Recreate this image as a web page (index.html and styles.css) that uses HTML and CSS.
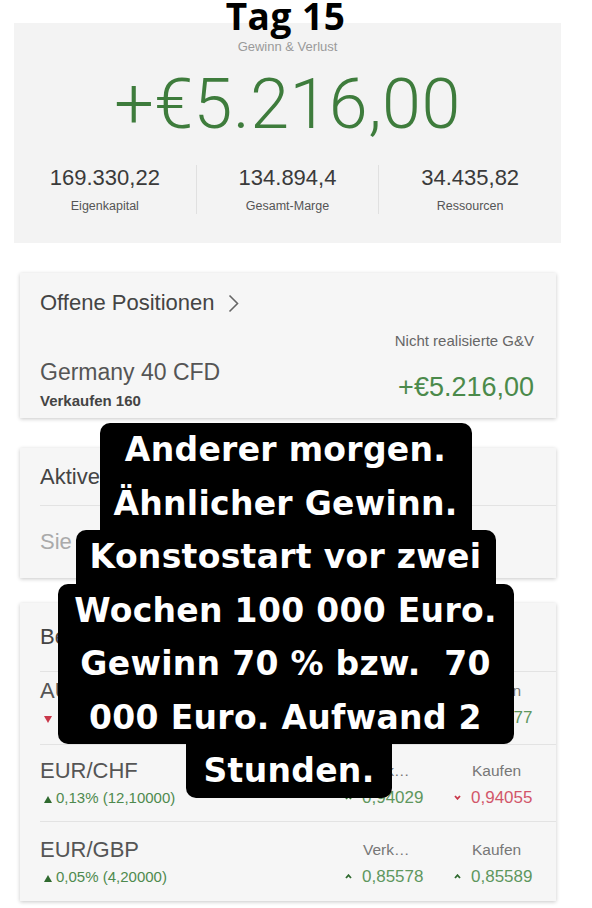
FILE: index.html
```html
<!DOCTYPE html>
<html lang="de">

<head>
    <meta charset="UTF-8">
    <meta name="viewport" content="width=device-width, initial-scale=1.0">
    <title>Tag 15</title>

    <link rel="stylesheet" href="styles.css">
</head>

<body>

    <div class="day">Tag 15</div>

    <section class="summary">
        <div class="summary-label">Gewinn &amp; Verlust</div>
        <div class="summary-total">+€5.216,00</div>
        <div class="stats">
            <div class="stat">
                <div class="stat-value">169.330,22</div>
                <div class="stat-label">Eigenkapital</div>
            </div>
            <div class="stat">
                <div class="stat-value">134.894,4</div>
                <div class="stat-label">Gesamt-Marge</div>
            </div>
            <div class="stat">
                <div class="stat-value">34.435,82</div>
                <div class="stat-label">Ressourcen</div>
            </div>
        </div>
    </section>

    <section class="card positions">
        <div class="card-title">
            Offene Positionen
            <svg class="chevron" width="11" height="19" viewBox="0 0 11 19"><polyline points="1.5,1.5 9.5,9.5 1.5,17.5" fill="none" stroke="#666" stroke-width="1.6"/></svg>
        </div>
        <div class="position">
            <div class="position-main">
                <div class="position-name">Germany 40 CFD</div>
                <div class="position-side">Verkaufen 160</div>
            </div>
            <div class="position-pl">
                <div class="pl-label">Nicht realisierte G&amp;V</div>
                <div class="pl-value">+€5.216,00</div>
            </div>
        </div>
    </section>

    <section class="card">
        <div class="card-head">Aktive Orders</div>
        <div class="card-note">Sie haben keine aktiven Orders</div>
    </section>

    <section class="card watch">
        <div class="card-head">Beobachtungsliste</div>

        <div class="pair-row row-first">
            <div class="pair">
                <div class="pair-name">AUD/USD</div>
                <div class="pair-change down">
                    <svg class="tri" width="8" height="7" viewBox="0 0 8 7"><polygon points="0,0 8,0 4,7" fill="#c9384a"/></svg> 0,04% (-2,70000)
                </div>
            </div>
            <div class="quote">
                <div class="quote-label">Verk…</div>
                <div class="quote-value up"><svg class="caret" width="7" height="5" viewBox="0 0 7 5"><polyline points="1,4 3.5,1.2 6,4" fill="none" stroke="#2f6a2f" stroke-width="1.8"/></svg>0,67263</div>
            </div>
            <div class="quote">
                <div class="quote-label">Kaufen</div>
                <div class="quote-value up"><svg class="caret" width="7" height="5" viewBox="0 0 7 5"><polyline points="1,4 3.5,1.2 6,4" fill="none" stroke="#2f6a2f" stroke-width="1.8"/></svg>0,67277</div>
            </div>
        </div>

        <div class="pair-row">
            <div class="pair">
                <div class="pair-name">EUR/CHF</div>
                <div class="pair-change">
                    <svg class="tri" width="8" height="7" viewBox="0 0 8 7"><polygon points="0,7 8,7 4,0" fill="#2f6a2f"/></svg>0,13% (12,10000)
                </div>
            </div>
            <div class="quote">
                <div class="quote-label">Verk…</div>
                <div class="quote-value up"><svg class="caret" width="7" height="5" viewBox="0 0 7 5"><polyline points="1,4 3.5,1.2 6,4" fill="none" stroke="#2f6a2f" stroke-width="1.8"/></svg>0,94029</div>
            </div>
            <div class="quote">
                <div class="quote-label">Kaufen</div>
                <div class="quote-value down"><svg class="caret" width="7" height="5" viewBox="0 0 7 5"><polyline points="1,1 3.5,3.8 6,1" fill="none" stroke="#c9384a" stroke-width="1.8"/></svg>0,94055</div>
            </div>
        </div>

        <div class="pair-row">
            <div class="pair">
                <div class="pair-name">EUR/GBP</div>
                <div class="pair-change">
                    <svg class="tri" width="8" height="7" viewBox="0 0 8 7"><polygon points="0,7 8,7 4,0" fill="#2f6a2f"/></svg>0,05% (4,20000)
                </div>
            </div>
            <div class="quote">
                <div class="quote-label">Verk…</div>
                <div class="quote-value up"><svg class="caret" width="7" height="5" viewBox="0 0 7 5"><polyline points="1,4 3.5,1.2 6,4" fill="none" stroke="#2f6a2f" stroke-width="1.8"/></svg>0,85578</div>
            </div>
            <div class="quote">
                <div class="quote-label">Kaufen</div>
                <div class="quote-value up"><svg class="caret" width="7" height="5" viewBox="0 0 7 5"><polyline points="1,4 3.5,1.2 6,4" fill="none" stroke="#2f6a2f" stroke-width="1.8"/></svg>0,85589</div>
            </div>
        </div>
    </section>

    <!-- Story-Text über dem Screenshot -->
    <div class="caption">
        <div class="caption-block block-1">Anderer morgen.<br>Ähnlicher Gewinn.</div>
        <div class="caption-block block-2">Konstostart vor zwei</div>
        <div class="caption-block block-3">Wochen 100 000 Euro.<br>Gewinn 70 % bzw.&nbsp; 70<br>000 Euro. Aufwand 2</div>
        <div class="caption-block block-4">Stunden.</div>
    </div>

</body>
</html>
```

FILE: styles.css
```css
body {
    margin: 0;
    padding: 0;
    position: relative;
    width: 592px;
    height: 908px;
    overflow: hidden;
    background: #fff;
    font-family: 'Liberation Sans', Arial, sans-serif;
    color: #555;
}

.day {
    position: absolute;
    top: 0;
    left: 0;
    width: 571px;
    text-align: center;
    font: 700 37px/32px 'Open Sans', sans-serif;
    letter-spacing: 0.5px;
    color: #000;
    z-index: 1;
}

.summary {
    margin: 23px 31px 0 14px;
    padding-top: 16px;
    height: 220px;
    box-sizing: border-box;
    background: #f3f3f3;
    text-align: center;
}

.summary-label {
    font-size: 13px;
    line-height: 16px;
    color: #9a9a9a;
}

.summary-total {
    margin-top: 9px;
    font: 300 70px/80px 'Roboto', sans-serif;
    letter-spacing: 0.5px;
    color: #3e7c3c;
}

.stats {
    display: flex;
    margin-top: 21px;
}

.stat {
    flex: 1;
}

.stat + .stat {
    border-left: 1px solid #e0e0e0;
}

.stat-value {
    font-size: 22px;
    line-height: 26px;
    color: #3a3a3a;
}

.stat-label {
    margin-top: 7px;
    font-size: 12.5px;
    line-height: 16px;
    color: #555;
}

.card {
    margin: 30px 36px 0 20px;
    background: #f6f6f6;
    box-shadow: 0 1px 4px rgba(0, 0, 0, 0.22);
}

.positions {
    margin-top: 30px;
    padding: 16px 22px 8px 20px;
}

.card-title {
    display: flex;
    align-items: center;
    gap: 13px;
    font-size: 22px;
    line-height: 28px;
    color: #444;
}

.position {
    display: flex;
    justify-content: space-between;
    margin-top: 15px;
}

.position-main {
    padding-top: 26px;
}

.position-name {
    font-size: 23px;
    line-height: 28px;
    color: #555;
}

.position-side {
    margin-top: 6px;
    font-size: 15px;
    line-height: 18px;
    font-weight: 700;
    color: #444;
}

.position-pl {
    text-align: right;
}

.pl-label {
    font-size: 15px;
    line-height: 18px;
    color: #666;
}

.pl-value {
    margin-top: 21px;
    font-size: 27px;
    line-height: 32px;
    color: #4b8a4b;
}

.card-head {
    margin-left: 20px;
    height: 57px;
    line-height: 57px;
    font-size: 22px;
    color: #444;
    border-bottom: 1px solid #e3e3e3;
}

.card-note {
    padding-left: 20px;
    height: 72px;
    line-height: 72px;
    font-size: 22px;
    color: #aaa;
}

.watch {
    margin-top: 25px;
}

.watch .card-head {
    height: 68px;
    line-height: 68px;
}

.pair-row {
    display: flex;
    align-items: center;
    margin-left: 20px;
    height: 77px;
    box-sizing: border-box;
    border-bottom: 1px solid #e3e3e3;
}

.pair-row.row-first {
    height: 73px;
    padding-bottom: 10px;
}

.pair-row:last-child {
    height: 79px;
    border-bottom: none;
}

.pair {
    flex: 1;
}

.pair-name {
    font-size: 22px;
    line-height: 26px;
    color: #555;
}

.pair-change {
    margin-top: 4px;
    font-size: 15px;
    line-height: 20px;
    color: #4e8a4e;
}

.pair-change.down {
    color: #c9384a;
}

.tri {
    margin: 0 4px 0 4px;
}

.quote {
    width: 109px;
}

.quote:last-child {
    width: 84px;
}

.quote-label {
    font-size: 15.5px;
    line-height: 26px;
    color: #777;
}

.quote-value {
    margin-top: 4px;
    font-size: 17px;
    line-height: 20px;
}

.quote-value.up {
    color: #5e975e;
}

.quote-value.down {
    color: #d2566a;
}

.caret {
    margin: 0 10px 2px -18px;
    vertical-align: middle;
}

.caption {
    position: absolute;
    top: 423px;
    left: 0;
    width: 571px;
    display: flex;
    flex-direction: column;
    align-items: center;
    font: 700 33px/53.5px 'DejaVu Sans', sans-serif;
    letter-spacing: 0.3px;
    color: #fff;
    text-align: center;
    white-space: nowrap;
}

.caption-block {
    background: #000;
}

.block-1 {
    width: 372px;
    border-radius: 10px 10px 0 0;
}

.block-2 {
    width: 420px;
    border-radius: 10px 10px 0 0;
}

.block-3 {
    width: 456px;
    border-radius: 10px;
}

.block-4 {
    width: 206px;
    margin-left: 7px;
    border-radius: 0 0 10px 10px;
}
```
